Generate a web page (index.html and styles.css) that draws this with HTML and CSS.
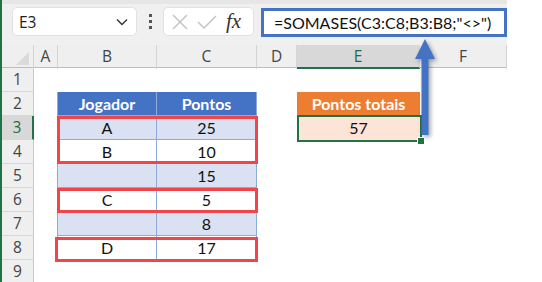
FILE: index.html
```html
<!DOCTYPE html>
<html lang="pt">
<head>
    <meta charset="UTF-8">
    <meta name="viewport" content="width=device-width, initial-scale=1.0">
    <title>SOMASES com critério diferente de vazio</title>
    <link rel="stylesheet" href="styles.css">
</head>
<body>
    <div class="app">
        <div class="toolbar">
            <div class="name-box">
                <span>E3</span>
                <svg class="chevron" width="12" height="8" viewBox="0 0 12 8">
                    <path d="M1 1.5 L6 6.5 L11 1.5" fill="none" stroke="#333" stroke-width="1.4"/>
                </svg>
            </div>
            <div class="grip"><i></i><i></i><i></i></div>
            <div class="fx-box">
                <svg width="20" height="20" viewBox="0 0 20 20">
                    <path d="M3 3 L17 17 M17 3 L3 17" stroke="#c4c4c4" stroke-width="1.5"/>
                </svg>
                <svg width="22" height="20" viewBox="0 0 22 20">
                    <path d="M2 10 L8 16 L20 4" fill="none" stroke="#c4c4c4" stroke-width="1.5"/>
                </svg>
                <span class="fx">fx</span>
            </div>
            <div class="formula">=SOMASES(C3:C8;B3:B8;"&lt;&gt;")</div>
        </div>

        <div class="sheet">
            <div class="row head">
                <div class="corner"></div>
                <div class="col">A</div>
                <div class="col">B</div>
                <div class="col">C</div>
                <div class="col">D</div>
                <div class="col active">E</div>
                <div class="col">F</div>
            </div>
            <div class="row">
                <div class="rh">1</div>
                <div></div><div></div><div></div><div></div><div></div><div></div>
            </div>
            <div class="row">
                <div class="rh">2</div>
                <div></div>
                <div class="cell th first">Jogador</div>
                <div class="cell th">Pontos</div>
                <div></div>
                <div class="cell total-head">Pontos totais</div>
                <div></div>
            </div>
            <div class="row">
                <div class="rh active">3</div>
                <div></div>
                <div class="cell alt first">A</div>
                <div class="cell alt">25</div>
                <div></div>
                <div class="cell total">57</div>
                <div></div>
            </div>
            <div class="row">
                <div class="rh">4</div>
                <div></div>
                <div class="cell first">B</div>
                <div class="cell">10</div>
                <div></div><div></div><div></div>
            </div>
            <div class="row">
                <div class="rh">5</div>
                <div></div>
                <div class="cell alt first"></div>
                <div class="cell alt">15</div>
                <div></div><div></div><div></div>
            </div>
            <div class="row">
                <div class="rh">6</div>
                <div></div>
                <div class="cell first">C</div>
                <div class="cell">5</div>
                <div></div><div></div><div></div>
            </div>
            <div class="row">
                <div class="rh">7</div>
                <div></div>
                <div class="cell alt first"></div>
                <div class="cell alt">8</div>
                <div></div><div></div><div></div>
            </div>
            <div class="row">
                <div class="rh">8</div>
                <div></div>
                <div class="cell first">D</div>
                <div class="cell">17</div>
                <div></div><div></div><div></div>
            </div>
            <div class="row">
                <div class="rh">9</div>
                <div></div><div></div><div></div><div></div><div></div><div></div>
            </div>

            <!-- rows counted by the formula -->
            <div class="mark mark-34"></div>
            <div class="mark mark-6"></div>
            <div class="mark mark-8"></div>

            <!-- active cell E3 -->
            <div class="selection"><span class="handle"></span></div>
        </div>

        <svg class="arrow" width="32" height="104" viewBox="0 0 32 104">
            <path d="M13 2 L23 22 L16.5 22 L16.5 98 L9.5 98 L9.5 22 L3 22 Z" fill="#4472c4"/>
        </svg>
    </div>
</body>
</html>
```

FILE: styles.css
```css
body {
    margin: 0;
    background-color: #fff;
    font-family: 'Open Sans', 'Noto Sans', sans-serif;
}

.app {
    position: relative;
    width: 505px;
    border-left: 2px solid #217346;
    height: 282px;
    overflow: hidden;
}

/* formula bar */

.toolbar {
    height: 45px;
    background-color: #f0f0f0;
    border-top: 4px solid #e6e6e6;
    box-sizing: border-box;
    display: flex;
    align-items: flex-start;
    padding-top: 3px;
}

.name-box {
    margin-left: 10px;
    width: 125px;
    height: 29px;
    box-sizing: border-box;
    background-color: #fff;
    border: 1px solid #e2e2e2;
    border-radius: 5px;
    display: flex;
    align-items: center;
    justify-content: space-between;
    padding: 0 8px 0 6px;
    font-size: 15.5px;
    color: #222;
}

.grip {
    width: 26px;
    height: 29px;
    display: flex;
    flex-direction: column;
    align-items: center;
    justify-content: center;
    gap: 3px;
}

.grip i {
    width: 3px;
    height: 3px;
    background-color: #555;
}

.fx-box {
    width: 91px;
    height: 29px;
    box-sizing: border-box;
    background-color: #fff;
    border: 1px solid #e2e2e2;
    border-radius: 5px;
    display: flex;
    align-items: center;
    gap: 6px;
    padding-left: 6px;
}

.fx {
    font-family: 'Liberation Serif', 'DejaVu Serif', serif;
    font-style: italic;
    font-size: 21px;
    color: #333;
    margin-left: 2px;
}

.formula {
    margin-left: 7px;
    margin-top: 1px;
    flex: 1;
    height: 29px;
    border: 3px solid #4472c4;
    background-color: #fff;
    box-sizing: border-box;
    display: flex;
    align-items: center;
    padding-left: 10px;
    font-family: 'Lato', sans-serif;
    font-size: 16px;
    color: #111;
}

/* grid */

.sheet {
    position: relative;
}

.row {
    display: grid;
    grid-template-columns: 32px 24px 99px 100px 40px 123px 87px;
    height: 24px;
}

.row.head {
    height: 23px;
    background-color: #efefef;
    border-bottom: 1px solid #bdbdbd;
    box-sizing: border-box;
}

.corner {
    position: relative;
    border-right: 1px solid #d4d4d4;
}

.corner::after {
    content: '';
    position: absolute;
    right: 4px;
    bottom: 4px;
    border-left: 13px solid transparent;
    border-bottom: 13px solid #dadada;
}

.col {
    border-right: 1px solid #d4d4d4;
    text-align: center;
    line-height: 22px;
    font-size: 15.5px;
    color: #444;
}

.col.active {
    background-color: #d8d8d8;
    color: #1e6b40;
    border-bottom: 2px solid #217346;
}

.rh {
    background-color: #efefef;
    border-right: 1px solid #c8c8c8;
    border-bottom: 1px solid #d8d8d8;
    text-align: center;
    line-height: 23px;
    font-size: 15.5px;
    color: #444;
}

.rh.active {
    background-color: #d8d8d8;
    color: #1e6b40;
    border-right: 2px solid #217346;
}

.cell {
    font-family: 'Lato', sans-serif;
    font-size: 16px;
    color: #111;
    text-align: center;
    line-height: 23px;
    border-right: 1px solid #8eaadb;
    border-bottom: 1px solid #8eaadb;
}

.cell.first {
    border-left: 1px solid #8eaadb;
    margin-left: -1px;
}

.cell.th {
    background-color: #4472c4;
    color: #fff;
    font-weight: bold;
}

.cell.alt {
    background-color: #d9e1f2;
}

.cell.total-head {
    background-color: #ed7d31;
    color: #fff;
    font-weight: bold;
    border: none;
    line-height: 24px;
}

.cell.total {
    background-color: #fce4d6;
    border: none;
    line-height: 24px;
}

/* red frames around the counted rows */

.mark {
    position: absolute;
    border: 3px solid #f0464b;
    box-sizing: border-box;
}

.mark-34 {
    left: 55px;
    top: 71px;
    width: 201px;
    height: 48px;
}

.mark-6 {
    left: 55px;
    top: 143px;
    width: 201px;
    height: 25px;
}

.mark-8 {
    left: 53px;
    top: 192px;
    width: 203px;
    height: 25px;
}

.selection {
    position: absolute;
    left: 295px;
    top: 70px;
    width: 125px;
    height: 27px;
    border: 2px solid #217346;
    box-sizing: border-box;
}

.handle {
    position: absolute;
    right: -5px;
    bottom: -5px;
    width: 6px;
    height: 6px;
    background-color: #217346;
    border: 1px solid #fff;
}

.arrow {
    position: absolute;
    left: 410px;
    top: 37px;
    filter: drop-shadow(2px 2px 2px rgba(0, 0, 0, 0.35));
}
```
